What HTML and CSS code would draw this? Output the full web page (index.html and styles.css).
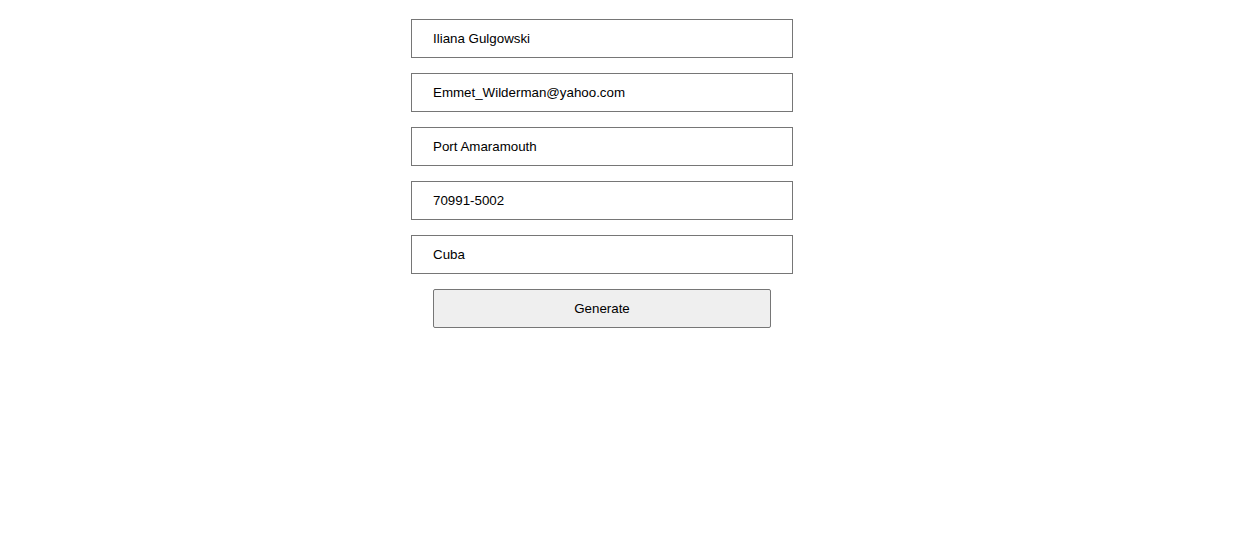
FILE: index.html
```html
<!DOCTYPE html>
<html>
<head>
<meta charset="utf-8">
<link rel="stylesheet" href="styles.css">
</head>
<body>
<main class="page">
  <form class="form">
    <input class="field" type="text" value="Iliana Gulgowski">
    <input class="field" type="text" value="Emmet_Wilderman@yahoo.com">
    <input class="field" type="text" value="Port Amaramouth">
    <input class="field" type="text" value="70991-5002">
    <input class="field" type="text" value="Cuba">
    <button class="btn" type="button">Generate</button>
  </form>
</main>
</body>
</html>
```
FILE: styles.css
```css
html, body {
  margin: 0;
  padding: 0;
  background: #ffffff;
}
.page {
  width: 1204px;
  padding-top: 19px;
}
.form {
  width: 382px;
  margin: 0 auto;
  display: flex;
  flex-direction: column;
  gap: 15px;
}
.field {
  box-sizing: border-box;
  height: 39px;
  width: 382px;
  margin: 0;
  padding: 0 21px;
  border: 1px solid #767676;
  border-radius: 0;
  font-family: "Liberation Sans", Arial, sans-serif;
  font-size: 13.333px;
  color: #000;
  background: #fff;
  outline: none;
}
.btn {
  box-sizing: border-box;
  height: 39px;
  width: 338px;
  margin: 0 22px;
  border: 1px solid #767676;
  border-radius: 2px;
  background: #efefef;
  font-family: "Liberation Sans", Arial, sans-serif;
  font-size: 13.333px;
  color: #000;
  padding: 0;
}
```
